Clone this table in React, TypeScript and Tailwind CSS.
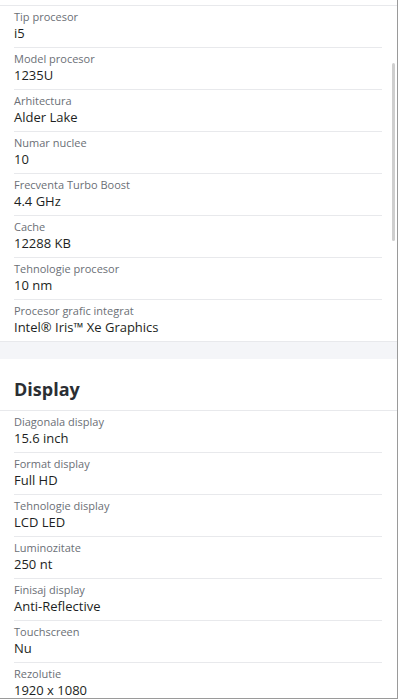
type TSpec = {
  label: string;
  value: string;
};

const procesor: TSpec[] = [
  { label: "Tip procesor", value: "i5" },
  { label: "Model procesor", value: "1235U" },
  { label: "Arhitectura", value: "Alder Lake" },
  { label: "Numar nuclee", value: "10" },
  { label: "Frecventa Turbo Boost", value: "4.4 GHz" },
  { label: "Cache", value: "12288 KB" },
  { label: "Tehnologie procesor", value: "10 nm" },
  { label: "Procesor grafic integrat", value: "Intel® Iris™ Xe Graphics" },
];

const display: TSpec[] = [
  { label: "Diagonala display", value: "15.6 inch" },
  { label: "Format display", value: "Full HD" },
  { label: "Tehnologie display", value: "LCD LED" },
  { label: "Luminozitate", value: "250 nt" },
  { label: "Finisaj display", value: "Anti-Reflective" },
  { label: "Touchscreen", value: "Nu" },
  { label: "Rezolutie", value: "1920 x 1080" },
];

function SpecRows({ items }: { items: TSpec[] }) {
  return (
    <div className="pl-[14px] pr-[15px]">
      {items.map((item, index) => (
        <div
          key={index}
          className={`pt-[3px] pb-[6px] ${index < items.length - 1 ? "border-b border-[#e8e9ec]" : ""}`}
        >
          <div className="text-[11px] leading-[16px] font-medium text-[#6b6f76]">{item.label}</div>
          <div className="text-[13px] leading-[16px] font-medium text-[#1d1f23]">{item.value}</div>
        </div>
      ))}
    </div>
  );
}

export default function App() {
  return (
    <div
      className="relative h-[699px] w-[398px] overflow-hidden border-r border-b border-[#9a9a9a] bg-white"
      style={{ fontFamily: '"Open Sans", "Noto Sans", sans-serif' }}
    >
      <div className="pt-[5px]">
        {/* Procesor */}
        <div className="border-t border-[#e8e9ec] bg-white">
          <SpecRows items={procesor} />
        </div>

        {/* separator */}
        <div className="h-[18px] border-t border-[#e8e9ec] bg-[#f4f5f8]" />

        {/* Display */}
        <div className="bg-white">
          <div className="border-b border-[#e8e9ec] pl-[14px] pt-[16px] pb-[7px]">
            <h2 className="text-[18px] leading-[28px] font-bold text-[#2b2e33]">Display</h2>
          </div>
          <SpecRows items={display} />
        </div>
      </div>

      {/* scrollbar */}
      <div className="absolute left-[392px] top-[63px] h-[178px] w-[3px] rounded-full bg-[#cfcfcf]" />
    </div>
  );
}
